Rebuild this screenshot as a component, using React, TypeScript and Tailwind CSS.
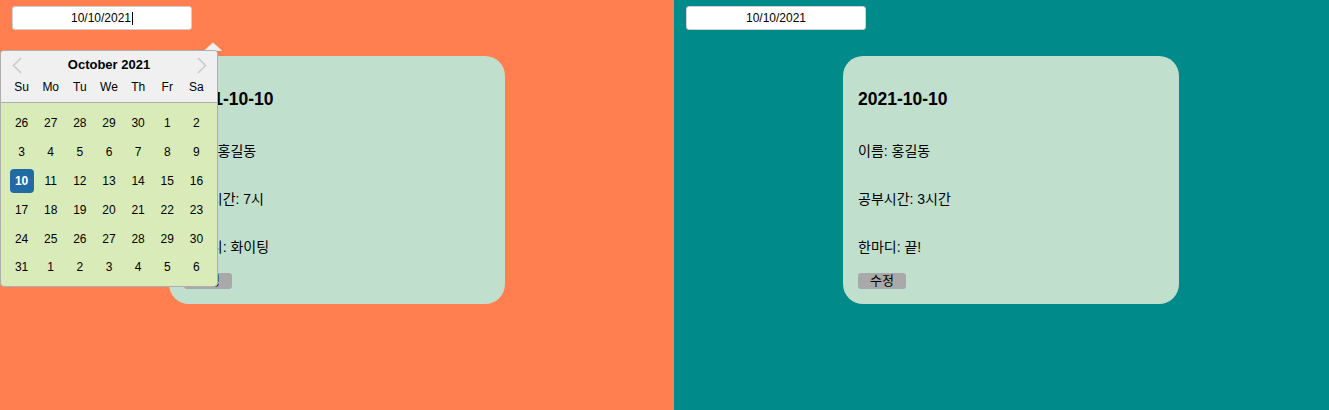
import React from "react";

type Entry = { date: string; name: string; hours: string; memo: string };

const weekDays = ["Su", "Mo", "Tu", "We", "Th", "Fr", "Sa"];
const weeks = [
  [26, 27, 28, 29, 30, 1, 2],
  [3, 4, 5, 6, 7, 8, 9],
  [10, 11, 12, 13, 14, 15, 16],
  [17, 18, 19, 20, 21, 22, 23],
  [24, 25, 26, 27, 28, 29, 30],
  [31, 1, 2, 3, 4, 5, 6],
];

function Chevron({ dir }: { dir: "left" | "right" }) {
  return (
    <svg width="10" height="17" viewBox="0 0 10 17" fill="none">
      <path
        d={dir === "left" ? "M9 1 L1.5 8.5 L9 16" : "M1 1 L8.5 8.5 L1 16"}
        stroke="#cccccc"
        strokeWidth="1.6"
      />
    </svg>
  );
}

function DatePopup() {
  return (
    <>
      <svg className="absolute left-[204px] top-[42px]" width="18" height="9" viewBox="0 0 18 9">
        <path d="M0.5 8.5 L9 0.8 L17.5 8.5 Z" fill="#f0f0f0" stroke="#e6e6e6" strokeWidth="0.8" />
      </svg>
      <div className="absolute left-0 top-[50px] w-[218px] overflow-hidden rounded-[4px] border border-[#aeaeae] bg-[#d8ebb8] text-black">
        <div className="relative border-b border-[#aeaeae] bg-[#f0f0f0] pb-[3px] pt-[6px]">
          <div className="absolute left-[11px] top-[6px]">
            <Chevron dir="left" />
          </div>
          <div className="absolute right-[10px] top-[6px]">
            <Chevron dir="right" />
          </div>
          <p className="text-center text-[13px] font-bold leading-[16px]">October 2021</p>
          <div className="mt-[2px] grid w-[204px] translate-x-[6px] grid-cols-7">
            {weekDays.map((d) => (
              <span key={d} className="flex h-[24px] items-center justify-center text-[12px]">
                {d}
              </span>
            ))}
          </div>
        </div>
        <div className="pb-[4px] pl-[6px] pt-[6px]">
          {weeks.map((week, wi) => (
            <div key={wi} className="grid h-[28.8px] w-[204px] grid-cols-7">
              {week.map((day, di) => {
                const selected = wi === 2 && di === 0;
                return (
                  <div key={di} className="flex items-center justify-center">
                    <span
                      className={
                        selected
                          ? "flex h-[24px] w-[24px] items-center justify-center rounded-[4px] bg-[#216ba5] text-[12px] font-bold text-white"
                          : "flex h-[24px] w-[24px] items-center justify-center text-[12px]"
                      }
                    >
                      {day}
                    </span>
                  </div>
                );
              })}
            </div>
          ))}
        </div>
      </div>
    </>
  );
}

function DiaryCard({ entry }: { entry: Entry }) {
  return (
    <div className="mt-[26px] flex h-[248px] w-[336px] flex-col items-start self-center rounded-[20px] bg-[#c0dfcd] px-[15px] text-black">
      <h3 className="mt-[33px] text-[17.5px] font-bold leading-[20px]">{entry.date}</h3>
      <p className="mt-[32px] text-[14px] leading-[20px]">이름: {entry.name}</p>
      <p className="mt-[28px] text-[14px] leading-[20px]">공부시간: {entry.hours}</p>
      <p className="mt-[28px] text-[14px] leading-[20px]">한마디: {entry.memo}</p>
      <button className="mt-[16px] h-[16px] w-[48px] rounded-[3px] bg-[#a9a9a9] text-[13px] leading-[16px]">
        수정
      </button>
    </div>
  );
}

function Panel({ bg, entry, open }: { bg: string; entry: Entry; open?: boolean }) {
  return (
    <div className={`relative flex h-full w-[674px] shrink-0 flex-col items-start ${bg}`}>
      <div className="ml-[12px] mt-[6px] flex h-[24px] w-[180px] items-center justify-center rounded-[3px] border border-[#cfcfcf] bg-white text-[12px] text-black">
        <span>10/10/2021</span>
        {open && <span className="ml-px h-[13px] w-px bg-black" />}
      </div>
      <DiaryCard entry={entry} />
      {open && <DatePopup />}
    </div>
  );
}

export default function App() {
  return (
    <div className="flex h-[410px] w-[1329px] overflow-hidden font-['Liberation_Sans','Noto_Sans_CJK_KR',sans-serif]">
      <Panel
        bg="bg-[#ff7f50]"
        open
        entry={{ date: "2021-10-10", name: "홍길동", hours: "7시", memo: "화이팅" }}
      />
      <Panel
        bg="bg-[#008b8a]"
        entry={{ date: "2021-10-10", name: "홍길동", hours: "3시간", memo: "끝!" }}
      />
    </div>
  );
}
